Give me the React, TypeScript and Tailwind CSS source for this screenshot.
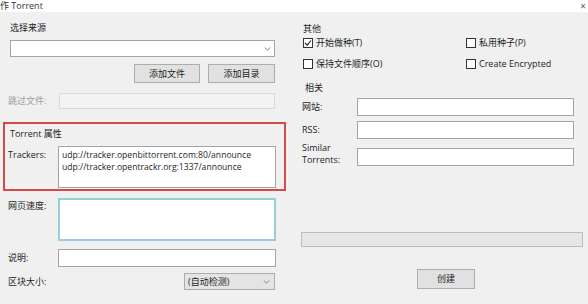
import React from 'react';

function Chevron() {
  return (
    <svg width="7" height="4" viewBox="0 0 8 5" className="shrink-0">
      <path d="M0.5 0.5 L4 4 L7.5 0.5" fill="none" stroke="#6a6a6a" strokeWidth="1" />
    </svg>
  );
}

function Checkbox({ checked = false, label }: { checked?: boolean; label: string }) {
  return (
    <div className="flex items-center h-[14px]">
      <div className="w-[10px] h-[10px] border border-[#333333] bg-white flex items-center justify-center">
        {checked && (
          <svg width="8" height="8" viewBox="0 0 8 8">
            <path d="M1 4 L3.2 6.2 L7 1.5" fill="none" stroke="#222222" strokeWidth="1.1" />
          </svg>
        )}
      </div>
      <span className="ml-[3px] leading-[14px]">{label}</span>
    </div>
  );
}

function Btn({ children, className = '' }: { children: React.ReactNode; className?: string }) {
  return (
    <div
      className={`h-[19px] bg-[#e1e1e1] border border-[#adadad] flex items-center justify-center ${className}`}
    >
      {children}
    </div>
  );
}

export default function App() {
  return (
    <div className="w-[588px] h-[304px] overflow-hidden bg-[#f0f0f0] text-[9px] text-[#1e1e1e] font-['Open_Sans','Noto_Sans_CJK_SC',sans-serif]">
      {/* Title bar */}
      <div className="h-[12px] bg-white flex items-center justify-between">
        <span className="leading-[12px] text-[#333333]">作 Torrent</span>
        <span className="mr-[2px] text-[10px] leading-[12px] text-[#555555]">×</span>
      </div>

      <div className="flex">
        {/* Left column */}
        <div className="w-[290px] flex flex-col">
          <div className="ml-[10px] mt-[9px] h-[14px] leading-[14px]">选择来源</div>
          <div className="ml-[10px] mt-[5px] w-[265px] h-[17px] bg-white border border-[#a5a5a5] flex items-center justify-end pr-[3px]">
            <Chevron />
          </div>
          <div className="mt-[7px] pr-[15px] flex justify-end gap-[8px]">
            <Btn className="w-[66px]">添加文件</Btn>
            <Btn className="w-[67px]">添加目录</Btn>
          </div>
          <div className="mt-[10px] flex items-center h-[16px]">
            <span className="w-[59px] pl-[8px] text-[#9c9c9c]">跳过文件:</span>
            <div className="w-[216px] h-[16px] border border-[#d9d9d9] bg-[#f3f3f3]" />
          </div>

          {/* Torrent properties (highlighted) */}
          <div className="mt-[13px] ml-[3px] w-[283px] h-[69px] border-2 border-[#d24a4a] flex flex-col">
            <div className="ml-[5px] mt-[3px] h-[14px] leading-[14px]">Torrent 属性</div>
            <div className="mt-[5px] flex items-start">
              <span className="w-[53px] pl-[3px] mt-[2px] leading-[14px]">Trackers:</span>
              <div className="w-[218px] h-[42px] bg-white border border-[#a5a5a5] pl-[3px] pt-[3px] text-[8.6px] leading-[11.5px]">
                <div>udp://tracker.openbittorrent.com:80/announce</div>
                <div>udp://tracker.opentrackr.org:1337/announce</div>
              </div>
            </div>
          </div>

          <div className="mt-[7px] flex items-start">
            <span className="w-[58px] pl-[8px] mt-[1px] leading-[14px]">网页速度:</span>
            <div className="w-[218px] h-[43px] bg-white border-2 border-[#96cfdb]" />
          </div>
          <div className="mt-[8px] flex items-center">
            <span className="w-[58px] pl-[8px] leading-[14px]">说明:</span>
            <div className="w-[218px] h-[18px] bg-white border border-[#a5a5a5]" />
          </div>
          <div className="mt-[6px] flex items-center pr-[15px]">
            <span className="pl-[8px] leading-[14px]">区块大小:</span>
            <div className="ml-auto w-[91px] h-[17px] bg-[#e4e4e4] border border-[#adadad] flex items-center justify-between pl-[3px] pr-[4px]">
              <span>(自动检测)</span>
              <Chevron />
            </div>
          </div>
        </div>

        {/* Right column */}
        <div className="flex-1 flex flex-col">
          <div className="ml-[13px] mt-[10px] h-[14px] leading-[14px]">其他</div>
          <div className="ml-[13px] grid grid-cols-[163px_1fr]">
            <Checkbox checked label="开始做种(T)" />
            <Checkbox label="私用种子(P)" />
          </div>
          <div className="ml-[13px] mt-[7px] grid grid-cols-[163px_1fr]">
            <Checkbox label="保持文件顺序(O)" />
            <Checkbox label="Create Encrypted" />
          </div>
          <div className="ml-[15px] mt-[10px] h-[14px] leading-[14px]">相关</div>

          <div className="mt-[3px] flex items-center">
            <span className="w-[67px] pl-[12px]">网站:</span>
            <div className="w-[217px] h-[18px] bg-white border border-[#a5a5a5]" />
          </div>
          <div className="mt-[5px] flex items-center">
            <span className="w-[67px] pl-[12px]">RSS:</span>
            <div className="w-[217px] h-[18px] bg-white border border-[#a5a5a5]" />
          </div>
          <div className="mt-[3px] flex items-start">
            <span className="w-[67px] pl-[12px] leading-[12px]">
              Similar
              <br />
              Torrents:
            </span>
            <div className="mt-[6px] w-[217px] h-[18px] bg-white border border-[#a5a5a5]" />
          </div>

          <div className="mt-[66px] ml-[11px] w-[282px] h-[15px] bg-[#e6e6e6] border border-[#bcbcbc]" />
          <Btn className="mt-[22px] ml-[127px] w-[58px] h-[20px]">创建</Btn>
        </div>
      </div>
    </div>
  );
}
